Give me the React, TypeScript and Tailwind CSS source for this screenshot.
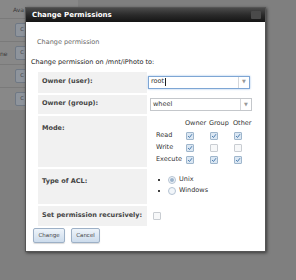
import React from 'react';

// ─── small widgets ───────────────────────────────────────────────────────────
const Check = ({ on }: { on?: boolean }) => (
  <span
    className={`flex h-[8px] w-[8px] items-center justify-center rounded-[1px] border ${
      on ? 'border-[#9fb6cc] bg-[#dbe7f3]' : 'border-[#c9cdd2] bg-[#f7f8f9]'
    }`}
  >
    {on && (
      <svg width="6" height="6" viewBox="0 0 6 6">
        <path d="M1 3 L2.5 4.5 L5 1.2" fill="none" stroke="#4f7fb0" strokeWidth="1" />
      </svg>
    )}
  </span>
);

const Radio = ({ on }: { on?: boolean }) => (
  <span className="flex h-[8px] w-[8px] items-center justify-center rounded-full border border-[#b5c3d2] bg-[#f2f6fa]">
    {on && <span className="h-[4px] w-[4px] rounded-full bg-[#9db4cc]" />}
  </span>
);

const Select = ({ value, focus }: { value: string; focus?: boolean }) => (
  <div
    className={`flex h-[13px] w-[102px] items-stretch bg-white ${
      focus ? 'border border-[#7ea6d4] shadow-[0_0_2px_#9ec0e8]' : 'border border-[#c4c7cb]'
    }`}
  >
    <span className="flex flex-1 items-center pl-[2px] text-[#333]">
      {value}
      {focus && <span className="ml-[1px] h-[8px] w-px bg-[#222]" />}
    </span>
    <span className="flex w-[11px] items-center justify-center border-l border-[#d5d7da] text-[5px] text-[#999]">
      ▼
    </span>
  </div>
);

const Row = ({ label, children, h, top }: { label: string; children: React.ReactNode; h: string; top?: boolean }) => (
  <div className={`flex ${h}`}>
    <div
      className={`flex w-[109px] shrink-0 bg-[#f1f1f1] pl-[4px] font-bold text-[#444] ${
        top ? 'pt-[8px]' : 'items-center'
      }`}
    >
      {label}
    </div>
    <div className="flex min-w-0 flex-1 pl-[1px]">{children}</div>
  </div>
);

const Btn = ({ text, w }: { text: string; w: string }) => (
  <button
    className={`${w} h-[15px] rounded-[2px] border border-[#9db0c6] bg-gradient-to-b from-[#eef4fa] to-[#cddcec] text-[5.5px] text-[#444] shadow-[0_1px_1px_rgba(0,0,0,0.15)]`}
  >
    {text}
  </button>
);

// ─── App ─────────────────────────────────────────────────────────────────────
export default function App() {
  const perms = [
    { name: 'Read', v: [true, true, true] },
    { name: 'Write', v: [true, false, false] },
    { name: 'Execute', v: [true, true, true] },
  ];

  return (
    <div
      className="relative h-[280px] w-[296px] overflow-hidden bg-[#7f7f7f] text-[6.5px]"
      style={{ fontFamily: "'DejaVu Sans', Verdana, sans-serif" }}
    >
      {/* dimmed page underneath */}
      <div className="flex w-[78px] flex-col bg-[#888888] text-[#3a3a3a]">
        <div className="flex h-[18px] items-center pl-[13px] text-[6px]">Ava</div>
        {['', 'ne', '', ''].map((t, i) => (
          <div key={i} className="flex h-[23px] items-center border-t border-[#7a7a7a]">
            <span className="w-[15px] text-[6px]">{t}</span>
            <span className="flex h-[14px] w-[14px] items-center justify-center rounded-[2px] border border-[#6f7884] bg-[#8e949c] text-[5px]">
              C
            </span>
          </div>
        ))}
      </div>

      {/* dialog */}
      <div className="absolute left-[25px] top-[7px] flex w-[241px] flex-col border border-[#555] bg-white shadow-[1px_1px_3px_rgba(0,0,0,0.55)]">
        <div className="flex h-[14px] items-center justify-between bg-gradient-to-b from-[#4a4a4a] via-[#2a2a2a] to-[#151515] pl-[6px] pr-[4px]">
          <span className="text-[7px] font-bold text-white">Change Permissions</span>
          <span className="h-[8px] w-[10px] rounded-[1px] bg-[#4a4a4a]" />
        </div>

        <div className="flex flex-col px-[5px] pb-[8px]">
          <div className="mt-[16px] pl-[6px] text-[#666]">Change permission</div>
          <div className="mt-[10px] text-[#222]">Change permission on /mnt/iPhoto to:</div>

          <div className="ml-[7px] mt-[4px] flex w-[218px] flex-col gap-[2px]">
            <Row label="Owner (user):" h="h-[21px]">
              <div className="flex items-center">
                <Select value="root" focus />
              </div>
            </Row>
            <Row label="Owner (group):" h="h-[19px]">
              <div className="flex items-center pl-[2px] pt-[1px]">
                <Select value="wheel" />
              </div>
            </Row>
            <Row label="Mode:" h="h-[51px]" top>
              <div className="flex flex-col pl-[8px] pt-[3px] text-[#333]">
                <div className="flex h-[11px] items-center pl-[29px]">
                  <span className="w-[24px]">Owner</span>
                  <span className="w-[24px]">Group</span>
                  <span>Other</span>
                </div>
                {perms.map((p) => (
                  <div key={p.name} className="flex h-[12px] items-center">
                    <span className="w-[30px]">{p.name}</span>
                    {p.v.map((on, i) => (
                      <span key={i} className="flex w-[24px] justify-start">
                        <Check on={on} />
                      </span>
                    ))}
                  </div>
                ))}
              </div>
            </Row>
            <Row label="Type of ACL:" h="h-[35px]" top>
              <div className="flex flex-col gap-[3px] pl-[10px] pt-[7px] text-[#333]">
                {[
                  ['Unix', true],
                  ['Windows', false],
                ].map(([t, on]) => (
                  <div key={t as string} className="flex h-[8px] items-center">
                    <span className="mr-[8px] h-[2px] w-[2px] rounded-full bg-black" />
                    <Radio on={on as boolean} />
                    <span className="ml-[3px]">{t as string}</span>
                  </div>
                ))}
              </div>
            </Row>
            <Row label="Set permission recursively:" h="h-[20px]">
              <div className="flex items-center pl-[5px]">
                <Check />
              </div>
            </Row>
          </div>

          <div className="mt-[2px] flex gap-[6px] pl-[2px]">
            <Btn text="Change" w="w-[32px]" />
            <Btn text="Cancel" w="w-[29px]" />
          </div>
        </div>
      </div>
    </div>
  );
}
